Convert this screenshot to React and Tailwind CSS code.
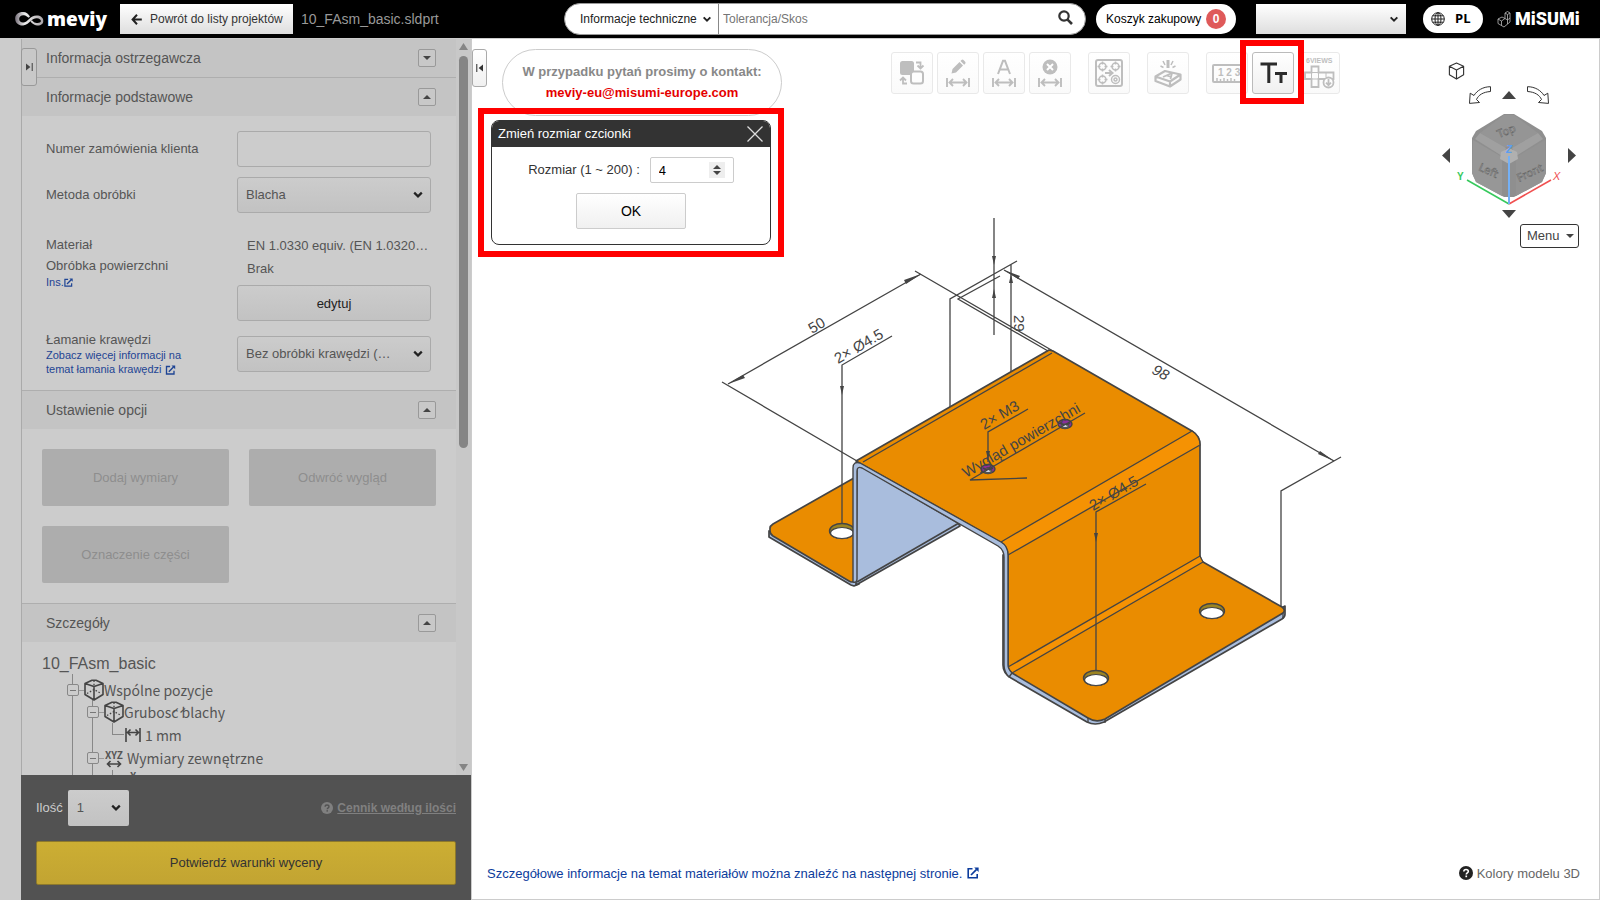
import React from "react";

const Chevron = ({ className = "" }) => (
  <svg viewBox="0 0 10 8" className={"pointer-events-none h-2 w-[10px] " + className} aria-hidden="true">
    <path d="M1.2 1.6 5 5.4 8.8 1.6" fill="none" stroke="#222" strokeWidth="2.2" />
  </svg>
);

const External = ({ className = "" }) => (
  <svg viewBox="0 0 12 12" className={"inline-block " + className} aria-hidden="true">
    <path d="M5.5 1.8H1.2v9h9V7" fill="none" stroke="currentColor" strokeWidth="1.6" />
    <path d="M7.2.6h4.4V5z" fill="currentColor" />
    <path d="M4 8 9.6 2.4" stroke="currentColor" strokeWidth="1.7" />
  </svg>
);

const Tri = ({ points, w, h, fill = "#444", className = "" }) => (
  <svg width={w} height={h} viewBox={`0 0 ${w} ${h}`} className={className} aria-hidden="true">
    <polygon points={points} fill={fill} />
  </svg>
);

const HelpMark = ({ bg, fg, className = "h-[14px] w-[14px]" }) => (
  <svg viewBox="0 0 14 14" className={"shrink-0 " + className} aria-hidden="true">
    <circle cx="7" cy="7" r="7" fill={bg} />
    <path d="M4.8 5.6c0-1.3.9-2.1 2.2-2.1s2.3.8 2.3 1.9c0 1.5-2 1.5-2 3" fill="none" stroke={fg} strokeWidth="1.6" />
    <rect x="6.4" y="9.5" width="1.7" height="1.7" fill={fg} />
  </svg>
);

function Header() {
  return (
    <header className="flex h-[39px] shrink-0 items-center border-b border-[#ccc] bg-black text-[13px]">
      <a href="#" className="ml-[15px] flex w-[90px] items-center gap-[2px] text-white">
        <svg viewBox="0 0 30 18" className="h-[18px] w-[30px] shrink-0" aria-hidden="true">
          <defs>
            <linearGradient id="lg" x1="0" x2="1">
              <stop offset="0" stopColor="#77707a" />
              <stop offset=".35" stopColor="#eee" />
              <stop offset="1" stopColor="#a9a4a8" />
            </linearGradient>
          </defs>
          <path d="M8 2C3 2-.2 5 .2 9.200c.4 4.300 4 6.600 8 6.200 3.600-.4 5.600-2.600 7.800-4.600 1.800-1.600 3.600-2.800 6-2.600 2.400.2 4 1.300 3.900 2.900-.1 2-3.200 2.300-5.400 1.700-1.600-.4-2.600-1.400-3.600-2.600l-1.400 1.300c1.600 2 3.500 3.600 6.500 3.900 3.600.3 6.300-1.400 6.300-4.500 0-3.400-2.800-5.300-6.600-5.300-3.400 0-5.500 1.500-7.600 3.400-2 1.900-3.700 3.700-6.100 3.600C5.600 12.500 4 11 4.200 8.600 4.400 6.200 6.500 4.800 9 5.200c1.800.3 3.200 1.300 4.600 2.500l1.400-1.200C13.400 4 11.300 2 8 2z" fill="url(#lg)" />
        </svg>
        <span className="font-['Open_Sans',sans-serif] text-[19px] leading-6 font-extrabold">meviy</span>
      </a>
      <button className="ml-[15px] flex h-[30px] w-[173px] items-center bg-linear-to-b from-white to-[#dedede] pl-[11px] text-[#333]">
        <svg viewBox="0 0 11 11" className="mr-2 h-[11px] w-[11px]" aria-hidden="true">
          <path d="M6 .8 1.600 5.500 6 10.200M1.800 5.500h9" fill="none" stroke="#222" strokeWidth="2" />
        </svg>
        <span className="whitespace-nowrap text-[12px]">Powrót do listy projektów</span>
      </button>
      <span className="ml-2 text-[14px] text-[#999]">10_FAsm_basic.sldprt</span>
      <form className="ml-auto flex h-[32px] w-[522px] items-center rounded-full border border-[#999] bg-white text-[12px]">
        <div className="relative flex h-full w-[154px] items-center border-r border-[#888]">
          <select aria-label="Kategoria" className="h-full w-full appearance-none bg-transparent pl-[15px] text-[12px] text-[#222]">
            <option>Informacje techniczne</option>
          </select>
          <Chevron className="absolute right-[6px] h-[7px] w-[9px]" />
        </div>
        <input aria-label="Szukaj" placeholder="Tolerancja/Skos" className="h-full min-w-0 flex-1 bg-transparent pl-1 text-[12px] placeholder:text-[#757575]" />
        <button type="button" aria-label="Szukaj" className="mr-3 mb-1">
          <svg viewBox="0 0 15 15" className="h-[15px] w-[15px]" aria-hidden="true">
            <circle cx="6" cy="6" r="4.700" fill="none" stroke="#333" strokeWidth="2.200" />
            <path d="m9.300 9.300 4.700 4.700" stroke="#333" strokeWidth="2.600" />
          </svg>
        </button>
      </form>
      <button className="ml-[10px] flex h-[30px] w-[140px] items-center justify-between rounded-full bg-white pr-[10px] pl-[10px] text-[12px] text-black">
        <span className="whitespace-nowrap">Koszyk zakupowy</span>
        <span className="flex h-5 w-5 items-center justify-center rounded-full bg-[#df5a5a] text-[12px] font-bold text-white">0</span>
      </button>
      <div className="relative ml-5 flex h-[30px] w-[150px] items-center bg-linear-to-b from-white to-[#dedede]">
        <select aria-label="Konto" className="h-full w-full appearance-none bg-transparent" defaultValue="">
          <option value=""></option>
        </select>
        <Chevron className="absolute right-[7px] h-[7px] w-[9px]" />
      </div>
      <button className="ml-[17px] flex h-7 w-[60px] items-center rounded-full bg-white pl-2 font-['Open_Sans',sans-serif] text-[13px] font-bold text-black">
        <svg viewBox="0 0 14 14" className="mr-[10px] h-[14px] w-[14px]" fill="none" stroke="#222" aria-hidden="true">
          <circle cx="7" cy="7" r="6.300" />
          <ellipse cx="7" cy="7" rx="3" ry="6.300" />
          <path d="M.7 7h12.600M7 .7v12.600M1.600 3.800h10.800M1.600 10.200h10.800" />
        </svg>
        PL
      </button>
      <a href="#" className="mr-7 ml-[14px] flex w-[75px] items-center gap-1 text-white">
        <svg viewBox="0 0 14 17" className="h-[17px] w-[14px] shrink-0" fill="none" stroke="#bbb" strokeWidth=".8" aria-hidden="true">
          <path d="m1 8 4-2 3 1.500V2l2.500-1.500L13 2v9l-6 5-6-3.500zM1 8l3.500 2L8 7.500M4.500 10v4.500M8 7.500l2.500 1.500L13 7M10.500 9v4M8 2l2.500 1.500L13 2M10.500 3.500V9" />
        </svg>
        <span className="font-['Liberation_Sans_Narrow','Roboto',sans-serif] text-[18px] leading-5 font-black">MiSUMi</span>
      </a>
    </header>
  );
}

function SectionHead({ title, down = false, line = true }) {
  return (
    <div className={"flex h-[39px] items-center justify-between border-t bg-[#c4c4c4] pr-5 pl-[24px] " + (line ? "border-[#aeaeae]" : "-mt-px border-transparent")}>
      <h2 className="text-[14px] text-[#555]">{title}</h2>
      <button aria-label={title} className="flex h-[18px] w-[18px] items-center justify-center rounded-[2px] border border-[#999] bg-[#c8c8c8]">
        {down ? <Tri w={8} h={4} points="0,0 8,0 4,4" /> : <Tri w={8} h={4} points="0,4 8,4 4,0" />}
      </button>
    </div>
  );
}

function SideSelect({ id, value }) {
  return (
    <div className="relative flex h-9 w-[194px] items-center rounded-[3px] border border-[#aaa] bg-linear-to-b from-[#ccc] to-[#c2c2c2]">
      <select id={id} className="h-full w-full appearance-none bg-transparent pl-2 text-[13px] text-[#555]">
        <option>{value}</option>
      </select>
      <Chevron className="absolute right-[7px]" />
    </div>
  );
}

const CubeIcon = () => (
  <svg viewBox="0 0 20 22" className="h-[22px] w-5 shrink-0" fill="none" stroke="#444" strokeWidth="1.600" strokeLinejoin="round" aria-hidden="true">
    <path d="M1 4.500 8 1.200h4l7 3.300v11L10 21l-9-5.500zM1 4.500l9 3 9-3M10 7.500V21" />
    <path d="m3 14.500 7-4 7 4M10 1.500v6" strokeDasharray="1.500 1.800" strokeWidth="1.300" />
  </svg>
);

const Minus = () => (
  <button aria-label="Zwiń" className="z-10 flex h-3 w-3 shrink-0 items-center justify-center rounded-[2px] border border-[#888] bg-[#ccc]">
    <span className="h-px w-[6px] bg-[#777]" />
  </button>
);

function Tree() {
  return (
    <div className="pt-3 pl-5 text-[#555]">
      <p className="text-[16px] leading-5">10_FAsm_basic</p>
      <ul className="ml-[30px] border-l border-[#888] font-['Noto_Sans_CJK_JP','Noto_Sans',sans-serif] text-[14px]">
        <li className="-ml-[6px]">
          <div className="flex h-[26px] items-center pt-[6px]">
            <Minus />
            <span className="h-px w-[5px] bg-[#999]" />
            <CubeIcon />
            <span>Wspólne pozycje</span>
          </div>
          <ul className="ml-[25px] border-l border-[#888]">
            <li className="-ml-[6px]">
              <div className="flex h-6 items-center">
                <Minus />
                <span className="h-px w-[5px] bg-[#999]" />
                <CubeIcon />
                <span>Grubość blachy</span>
              </div>
              <div className="ml-[25px] flex h-[22px] items-center">
                <span className="mb-[11px] h-3 w-3 self-end border-b border-l border-[#888]" />
                <svg viewBox="0 0 16 14" className="mx-px h-[14px] w-4" fill="none" stroke="#444" strokeWidth="1.600" aria-hidden="true">
                  <path d="M1 0v14M15 0v14M3 4.500h10M5.500 1.500 2.500 4.500l3 3M10.500 1.500l3 3-3 3" />
                </svg>
                <span className="ml-[3px]">1 mm</span>
              </div>
            </li>
            <li className="-ml-[6px]">
              <div className="flex h-6 items-center">
                <Minus />
                <span className="h-px w-[5px] bg-[#999]" />
                <span className="flex w-[20px] flex-col items-center">
                  <span className="text-[10px] leading-[11px] font-bold">XYZ</span>
                  <svg viewBox="0 0 16 8" className="h-2 w-4" fill="none" stroke="#444" strokeWidth="1.600" aria-hidden="true">
                    <path d="M1.500 4h13M4.500 1 1.500 4l3 3M11.500 1l3 3-3 3" />
                  </svg>
                </span>
                <span className="ml-[3px]">Wymiary zewnętrzne</span>
              </div>
              <div className="ml-[25px] flex h-[23px] items-start border-l border-[#888] pl-[17px]">
                <span className="text-[10px] leading-[11px] font-bold">X</span>
              </div>
            </li>
          </ul>
        </li>
      </ul>
    </div>
  );
}

function Sidebar() {
  const option = "flex h-[57px] items-center justify-center rounded-[2px] bg-[#adadad] text-[13px] text-[#8e8e8e]";
  return (
    <aside className="flex w-[471px] shrink-0 bg-[#ccc] pl-[21px]">
      <div className="relative flex min-w-0 flex-1 flex-col">
        <div className="flex min-h-0 flex-1 border-l border-[#aaa]">
          <div className="min-w-0 flex-1 overflow-hidden">
            <SectionHead title="Informacja ostrzegawcza" down line={false} />
            <SectionHead title="Informacje podstawowe" />
            <div className="pt-[15px] pr-[25px] pb-[14px] pl-[24px] text-[13px] text-[#555]">
              <div className="flex items-center justify-between">
                <label htmlFor="order">Numer zamówienia klienta</label>
                <input id="order" className="h-9 w-[194px] rounded-[3px] border border-[#aaa] bg-[#ccc] px-2" />
              </div>
              <div className="mt-[10px] flex items-center justify-between">
                <label htmlFor="method">Metoda obróbki</label>
                <SideSelect id="method" value="Blacha" />
              </div>
              <div className="mt-[21px] flex justify-between">
                <div className="leading-[21px]">
                  <p>Materiał</p>
                  <p>Obróbka powierzchni</p>
                  <a href="#" className="flex items-center text-[11px] leading-3 text-[#1e4494]">
                    Ins.
                    <External className="h-[9px] w-[9px]" />
                  </a>
                </div>
                <div className="w-[194px] leading-[23px]">
                  <p className="pl-[10px] whitespace-nowrap">EN 1.0330 equiv. (EN 1.0320…</p>
                  <p className="pl-[10px]">Brak</p>
                  <button className="mt-[5px] h-9 w-full rounded-[3px] border border-[#aaa] bg-linear-to-b from-[#ccc] to-[#c2c2c2] text-[13px] text-[#222]">edytuj</button>
                </div>
              </div>
              <div className="mt-[11px] flex items-center justify-between">
                <div>
                  <label htmlFor="edge" className="block leading-4">Łamanie krawędzi</label>
                  <a href="#" className="block w-[150px] text-[11px] leading-[14px] text-[#1e4494]">
                    Zobacz więcej informacji na temat łamania krawędzi <External className="h-[10px] w-[11px]" />
                  </a>
                </div>
                <SideSelect id="edge" value="Bez obróbki krawędzi (…" />
              </div>
            </div>
            <SectionHead title="Ustawienie opcji" />
            <div className="grid grid-cols-2 gap-5 p-5">
              <button className={option}>Dodaj wymiary</button>
              <button className={option}>Odwróć wygląd</button>
              <button className={option}>Oznaczenie części</button>
            </div>
            <SectionHead title="Szczegóły" />
            <Tree />
          </div>
          <div className="flex w-[15px] flex-col items-center bg-[#c8c8c8] pt-[4px] pb-1">
            <Tri w={9} h={7} points="0,7 9,7 4.5,0" fill="#858585" />
            <div className="mt-[6px] w-[9px] flex-[391] rounded-full bg-[#858585]" />
            <div className="flex-[316]" />
            <Tri w={9} h={7} points="0,0 9,0 4.5,7" fill="#858585" />
          </div>
        </div>
        <div className="bg-[#525252] px-[15px] pt-[15px] pb-[15px]">
          <div className="flex items-center justify-between">
            <div className="flex items-center gap-[5px] text-[13px]">
              <label htmlFor="qty" className="text-[#ccc]">Ilość</label>
              <div className="relative flex h-9 w-[61px] items-center rounded-[2px] bg-linear-to-b from-[#ccc] to-[#c2c2c2]">
                <select id="qty" className="h-full w-full appearance-none bg-transparent pl-[9px] text-[13px] text-[#555]">
                  <option>1</option>
                </select>
                <Chevron className="absolute right-2" />
              </div>
            </div>
            <a href="#" className="flex items-center gap-1 text-[12px] text-[#808080]">
              <HelpMark bg="#808080" fg="#525252" className="h-3 w-3" />
              <span className="font-bold underline">Cennik według ilości</span>
            </a>
          </div>
          <button className="mt-[15px] h-11 w-full rounded-[2px] border border-[#8d792c] bg-linear-to-b from-[#ccae33] to-[#c2a432] text-[13px] text-[#333]">Potwierdź warunki wyceny</button>
        </div>
        <button aria-label="Rozwiń panel" className="absolute top-[9px] left-0 flex h-[38px] w-[16px] items-center justify-center rounded-[3px] border border-[#999] bg-[#c8c8c8]">
          <svg viewBox="0 0 8 9" className="h-2 w-[7px]" aria-hidden="true"><path d="M0 .5v8l5-4zM6.500 0h1.200v9H6.500z" fill="#444" /></svg>
        </button>
      </div>
    </aside>
  );
}

const G = "#bebebe";
const Span = () => <path d="M2 18v9M24 18v9M4 22.500h18M8 19l-3.500 3.500L8 26M18 19l3.500 3.500L18 26" fill="none" stroke={G} strokeWidth="1.900" />;

const tools = [
  { name: "Zamień", gap: false, icon: (
    <>
      <rect x="1" y="1" width="14" height="14" rx="2.500" fill={G} />
      <rect x="12" y="11.500" width="12" height="12" rx="2.500" fill="#fdfdfd" stroke={G} strokeWidth="2" />
      <path d="M17 2.500h4.500V7M18.500 5.500l3 3 3-3M8 23.500H4V19M1 20.500l3-3 3 3" fill="none" stroke={G} strokeWidth="1.800" />
    </>
  ) },
  { name: "Edytuj wymiar", gap: false, icon: (<><path d="m6.500 13.500 1-4.500 7-7 3.500 3.500-7 7zM15.500 1l1-1q1-.8 2 0l1.700 1.700q.8 1 0 2l-1 1z" fill={G} /><Span /></>) },
  { name: "Tekst", gap: false, icon: (<><path d="M7 14 12 .8h2L19 14M9 9.500h8" fill="none" stroke={G} strokeWidth="2" /><Span /></>) },
  { name: "Usuń wymiar", gap: false, icon: (<><circle cx="13" cy="7" r="7.500" fill={G} /><path d="m10 4 6 6m0-6-6 6" stroke="#fff" strokeWidth="2" /><Span /></>) },
  { name: "Otwory", gap: true, icon: (
    <g fill="none" stroke={G} strokeWidth="1.500">
      <rect x="0" y="0" width="26" height="26" rx="2" strokeWidth="2" />
      <circle cx="6.500" cy="6.500" r="3.500" /><circle cx="19.500" cy="6.500" r="3.500" /><circle cx="6.500" cy="19.500" r="3.500" /><circle cx="19.500" cy="19.500" r="4" /><circle cx="19.500" cy="19.500" r="1.500" />
      <path d="M6.500 1.500v3M6.500 8.500v3M1.500 6.500h3M8.500 6.500h3M19.500 1.500v3M19.500 8.500v3M14.500 6.500h3M21.500 6.500h3M6.500 14.500v3M6.500 21.500v3M1.500 19.500h3M8.500 19.500h3" />
      <path d="M9 13h7M13 10l3.500 3-3.500 3" strokeWidth="2" />
    </g>
  ) },
  { name: "Grawerowanie", gap: true, icon: (
    <g fill="none" stroke={G} strokeWidth="2.200" strokeLinejoin="round">
      <path d="M.5 16.500 10 11l15.500 3.500L15 21.500zM.5 16.500v4.500L15 26.500l10.500-7v-5M15 21.500v5" />
      <path d="m8 17 9-4-1.500 6M11.500 15.500l5 1.500" strokeWidth="1.800" />
      <path d="M13 0v8" strokeWidth="3" />
      <path d="M8 1l2 4M18 1l-2 4M5.500 6l3 1.500M20.500 6l-3 1.500" strokeWidth="1.500" />
    </g>
  ) },
  { name: "Pomiar", gap: true, icon: (
    <>
      <rect x="-1" y="5" width="29" height="17" rx="1" fill="none" stroke={G} strokeWidth="2" />
      <path d="M3 22v-4M6.500 22v-3M10 22v-4M13.500 22v-3M17 22v-4M20.500 22v-3" stroke={G} strokeWidth="1.500" />
      <text x="4" y="15.500" fill={G} className="font-['Liberation_Sans',sans-serif] text-[10px] font-bold">1 2 3</text>
    </>
  ) },
  { name: "Rozmiar czcionki", gap: false, active: true, icon: (
    <path d="M.5 4H17M8.800 4v19M15 13.500h12M21 13.500V23" fill="none" stroke="#2b2b2b" strokeWidth="3" />
  ) },
  { name: "6 widoków", gap: false, icon: (
    <>
      <text x="0" y="3" fill={G} className="font-['Liberation_Sans',sans-serif] text-[7px] font-bold">6VIEWS</text>
      <g fill="none" stroke={G} strokeWidth="1.800">
        <path d="M5.500 12.500V6.500h7v6h15V19h-15v8h-7v-8H-1v-6.500z" />
        <path d="M5.500 12.500h7V19h-7zM20 12.500V17" strokeWidth="1" />
        <circle cx="22.500" cy="22.500" r="5" fill="#fdfdfd" />
        <path d="M22.500 19v6M20 22.700l2.500 2.500 2.500-2.500" />
      </g>
    </>
  ) },
];

function Toolbar() {
  return (
    <div role="toolbar" className="flex gap-1 pt-[13px]">
      {tools.map((t) => (
        <div key={t.name} className={"relative " + (t.gap ? "ml-[13px]" : "") + (t.active ? " z-10" : "")}>
          <button
            aria-label={t.name}
            className={"flex h-[42px] w-[42px] items-center justify-center rounded-[3px] border bg-linear-to-b " + (t.active ? "border-[#bbb] from-white to-[#f0f0f0]" : "border-[#e9e9e9] from-white to-[#fafafa]")}
          >
            <svg viewBox="0 0 26 26" className="h-[26px] w-[26px] overflow-visible" aria-hidden="true">{t.icon}</svg>
          </button>
          {t.active && <div className="pointer-events-none absolute -top-3 -right-[10px] -bottom-[10px] -left-3 border-6 border-[#f00]" />}
        </div>
      ))}
    </div>
  );
}

function ViewCube() {
  const t = "font-['Noto_Sans',sans-serif] text-[11px]";
  return (
    <nav aria-label="Widok" className="flex w-[140px] flex-col items-center pt-[23px]">
      <button aria-label="Widok domyślny" className="ml-[9px] self-start">
        <svg viewBox="0 0 17 19" className="block h-[18px] w-[17px]" fill="none" stroke="#333" strokeWidth="1.200" strokeLinejoin="round" aria-hidden="true">
          <path d="M8.500 1 16 4.500v9L8.500 18 1 13.500v-9zM1 4.500 8.500 8.500 16 4.500M8.500 8.500V18" />
        </svg>
      </button>
      <div className="mt-[6px] flex w-[80px] items-center justify-between">
        <button aria-label="Obróć w lewo">
          <svg viewBox="0 0 22 18" className="block h-[18px] w-[22px]" fill="none" stroke="#333" aria-hidden="true"><path d="M21.500.7C14 .7 8 4.500 5 9.500L1.200 7.200.5 17.400l10-.9-3-3C9.500 9 14 6 21.500 5.500z" /></svg>
        </button>
        <button aria-label="Obróć w górę"><Tri w={14} h={8} points="0,8 14,8 7,0" className="block" /></button>
        <button aria-label="Obróć w prawo">
          <svg viewBox="0 0 22 18" className="block h-[18px] w-[22px]" fill="none" stroke="#333" aria-hidden="true"><path d="M.5.7C8 .7 14 4.500 17 9.500l3.800-2.300.7 10.200-10-.9 3-3C12.500 9 8 6 .5 5.500z" /></svg>
        </button>
      </div>
      <div className="mt-[9px] flex w-[134px] items-center justify-between">
        <button aria-label="Lewo" className="mb-2"><Tri w={8} h={15} points="8,0 8,15 0,7.5" /></button>
        <svg viewBox="0 0 106 92" className="h-[92px] w-[106px]" aria-label="Orientacja">
          <path d="M48 1h10l28 17 4 7v35l-4 9-28 15H48L20 69l-4-9V25l4-7z" fill="#8f8f8f" />
          <path d="m24 20 24-18h10l24 18-24 14H48z" fill="#959595" />
          <path d="m24 20-5 6 27 17 4-8zM82 20l5 6-27 17-4-8z" fill="#a0a0a0" />
          <path d="m17 27 29 17v39L20 69l-4-9z" fill="#979797" />
          <path d="m89 27-29 17v39l26-14 4-9z" fill="#939393" />
          <path d="m45 39 8-4 8 4 1 7-9 5-9-5z" fill="#b0b0b0" />
          <g fill="#c2c2c2" stroke="#666" strokeWidth=".6">
            <text transform="translate(43 25) rotate(-22)" className={t}>Top</text>
            <text transform="translate(22 57) rotate(24)" className={t}>Left</text>
            <text transform="translate(63 69) rotate(-25)" className={t}>Front</text>
          </g>
          <path d="M11 67 53 91" stroke="#36c95c" strokeWidth="1.600" />
          <path d="M95 67 53 91" stroke="#f05050" strokeWidth="1.600" />
          <path d="M53 91V43" stroke="#74b0f5" strokeWidth="2" />
          <text x="50" y="40" fill="#5b9df0" className="font-['Liberation_Sans',sans-serif] text-[10px] font-bold italic">Z</text>
          <text x="1" y="67" fill="#36c95c" className="font-['Liberation_Sans',sans-serif] text-[10px] font-bold">Y</text>
          <text x="97" y="67" fill="#f05050" className="font-['Liberation_Sans',sans-serif] text-[11px] italic">X</text>
        </svg>
        <button aria-label="Prawo" className="mb-2"><Tri w={8} h={15} points="0,0 0,15 8,7.5" /></button>
      </div>
      <button aria-label="Obróć w dół" className="mt-[5px]"><Tri w={14} h={8} points="0,0 14,0 7,8" className="block" /></button>
      <button className="mt-[6px] flex h-6 w-[59px] items-center justify-between self-end rounded-[3px] border border-[#333] bg-white pr-1 pl-[6px] text-[13px] text-[#444]">
        Menu
        <Tri w={8} h={4} points="0,0 8,0 4,4" />
      </button>
    </nav>
  );
}

const Hole = ({ x, y }) => (
  <g>
    <ellipse cx={x} cy={y} rx="12.500" ry="7.500" fill="#9b8422" stroke="#444" strokeWidth="1.400" />
    <ellipse cx={x} cy={y + 2} rx="11.500" ry="5.500" fill="#fff" stroke="#444" strokeWidth="1.200" />
  </g>
);

const Tapped = ({ x, y }) => (
  <g>
    <ellipse cx={x} cy={y} rx="7" ry="4.500" fill="#8b2f9c" stroke="#444" strokeWidth="1.400" />
    <ellipse cx={x} cy={y + 2} rx="3.500" ry="1.800" fill="#d8dcec" stroke="#555" />
    <path d={`M${x - 5} ${y - 1}l4 2M${x + 5} ${y - 1}l-4 2`} stroke="#444" />
  </g>
);

function Model() {
  const t = "font-['Liberation_Sans',sans-serif] text-[15px]";
  return (
    <svg viewBox="472 39 1127 860" className="absolute inset-0 h-full w-full" aria-label="Model 3D">
      <g stroke="#444" strokeWidth="1.700" strokeLinejoin="round">
        {/* left flange */}
        <path d="M769 531v6l82 48 3 1 5-2v-20z" fill="#a9bddd" />
        <path d="M770 528q0-2 3-4l81-46v103q-2 2-5 0l-76-45q-3-2-3-5z" fill="#ea8c00" />
        <Hole x={842} y={531} />
        {/* rear wall seen from inside */}
        <path d="M857 464 958 523l2 3-104 59z" fill="#a9bddd" />
        <path d="M857 582 959 523" fill="none" />
        {/* right flange thickness */}
        <path d="M1003 555v110q0 8 8 13l76 44q8 4 17 0l178-103q3-2 3-5v-8l-190 105z" fill="#a9bddd" />
        {/* outer skin */}
        <path d="M856 461 1049 350l4 1 139 80q8 5 8 14v111q0 3 3 6l79 45q4 3 1 6L1105 719q-9 4-17-1l-76-45q-4-4-4-8V555q0-8-8-13z" fill="#ea8c00" />
        <path d="M1001 542 1192 431q8 5 8 14L1008 555q0-8-7-13z" fill="#f59203" strokeWidth="1.300" />
        <path d="M1008 667 1200 556l3 6-191 111q-3-2-4-6z" fill="#f59203" strokeWidth="1.300" />
        <path d="M863 462 1052 353" fill="none" strokeWidth="1.300" />
        <path d="M1283 613v6M1105 719v4M1088 718v4" fill="none" strokeWidth="1.300" />
        {/* front profile */}
        <path d="M853 582V468q0-7 7-5l141 79q7 4 7 13v110q0 4 4 8l-3 4q-5-5-5-12V557q0-7-6-11L862 468q-5-2-5 3v108q0 4-4 3z" fill="#a9bddd" strokeWidth="1.400" />
        <Hole x={1096} y={678} />
        <Hole x={1212} y={611} />
        <Tapped x={1065} y={424} />
        <Tapped x={988} y={469} />
      </g>
      <g fill="none" stroke="#444" strokeWidth="1.300">
        <path d="M728 384 921 274M722 382 857 461M915 271 1053 351M1048 351 958 299 1000 276M950 407V299L1017 261M1011 372V264M994 218V335" />
        <path d="M1004 270 1334 461M1341 457 1281 491V607" />
        <path d="M842 523V365L892 336M1096 670V512L1146 484M988 462V432L1028 409" />
        <path d="M1027 478 970 480 1085 413" />
      </g>
      <g fill="#444">
        <path d="m728 384 17-6-2-3zM921 274l-17 6 2 4zM842 395l-2-9h4zM1096 542l-2-9h4zM988 460l-2-9h4zM994 265l-2-9h4zM994 289l-2 9h4zM1011 274l-2 9h4zM1004 270l16 6-2 3zM1334 461l-16-7 2-3z" />
        <text transform="translate(812 334) rotate(-30)" className={t}>50</text>
        <text transform="translate(838 364) rotate(-30)" className={t}>2× Ø4.5</text>
        <text transform="translate(1014 315) rotate(90)" className={t}>29</text>
        <text transform="translate(1151 373) rotate(28)" className={t + " italic"}>98</text>
        <text transform="translate(984 430) rotate(-30)" className={t}>2× M3</text>
        <text transform="translate(966 478) rotate(-30)" className={t}>Wygląd powierzchni</text>
        <text transform="translate(1093 511) rotate(-30)" className={t}>2× Ø4.5</text>
      </g>
    </svg>
  );
}

function FontDialog() {
  return (
    <div className="absolute top-[69px] left-[6px] z-20 border-6 border-[#f00] px-[7px] pt-[6px] pb-[6px]">
      <section role="dialog" aria-labelledby="dlg" className="w-[280px] overflow-hidden rounded-lg border border-[#333] bg-white text-[13px]">
        <div className="flex h-[26px] items-center justify-between bg-[#333] pr-[7px] pl-[6px] text-white">
          <h2 id="dlg">Zmień rozmiar czcionki</h2>
          <button aria-label="Zamknij">
            <svg viewBox="0 0 16 16" className="h-4 w-4" aria-hidden="true"><path d="m.5.5 15 15m0-15-15 15" stroke="#ddd" strokeWidth="1.300" /></svg>
          </button>
        </div>
        <div className="flex flex-col items-center pt-[10px] pb-[15px]">
          <div className="flex items-center gap-[10px] text-[#333]">
            <label htmlFor="size">Rozmiar (1 ~ 200) :</label>
            <div className="relative flex h-[26px] w-[84px] items-center rounded-[2px] border border-[#ccc]">
              <input id="size" type="number" defaultValue="4" className="h-full w-full [appearance:textfield] bg-transparent pl-2 text-[13px] text-black [&::-webkit-inner-spin-button]:appearance-none" />
              <div className="absolute right-2 flex h-4 w-4 flex-col items-center justify-center gap-[2px] bg-[#eee]">
                <Tri w={8} h={4} points="0,4 8,4 4,0" />
                <Tri w={8} h={4} points="0,0 8,0 4,4" />
              </div>
            </div>
          </div>
          <button className="mt-[10px] h-9 w-[110px] rounded-[2px] border border-[#ccc] bg-linear-to-b from-white to-[#f0f0f0] text-[14px] text-black">OK</button>
        </div>
      </section>
    </div>
  );
}

function Viewer() {
  return (
    <main className="relative flex min-w-0 flex-1 flex-col border-x border-b border-[#ccc] bg-white">
      <Model />
      <div className="relative flex items-start">
        <button aria-label="Zwiń panel" className="mt-[10px] flex h-[38px] w-[15px] shrink-0 items-center justify-center rounded-[3px] border border-[#aaa] bg-linear-to-b from-white to-[#f0f0f0]">
          <svg viewBox="0 0 8 9" className="h-2 w-[7px]" aria-hidden="true"><path d="M8 .5v8l-5-4zM.3 0h1.200v9H.3z" fill="#333" /></svg>
        </button>
        <div className="mt-[10px] ml-[15px] flex h-[67px] w-[280px] shrink-0 flex-col items-center rounded-[34px] border border-[#ccc] pt-[11px] text-[13px] leading-[21px] font-bold">
          <p className="text-[#888]">W przypadku pytań prosimy o kontakt:</p>
          <a href="mailto:meviy-eu@misumi-europe.com" className="text-[#e50000]">meviy-eu@misumi-europe.com</a>
        </div>
        <div className="ml-auto flex items-start gap-[99px] pr-5">
          <Toolbar />
          <ViewCube />
        </div>
      </div>
      <FontDialog />
      <footer className="relative mt-auto flex items-center justify-between pr-[19px] pb-4 pl-[15px]">
        <a href="#" className="flex items-center gap-[5px] text-[13px] text-[#0c3c9c]">
          Szczegółowe informacje na temat materiałów można znaleźć na następnej stronie.
          <External className="h-3 w-3" />
        </a>
        <button className="flex items-center gap-1 text-[13px] text-[#666]">
          <HelpMark bg="#222" fg="#fff" />
          Kolory modelu 3D
        </button>
      </footer>
    </main>
  );
}

export default function App() {
  return (
    <div className="flex h-screen flex-col overflow-hidden bg-white font-['Liberation_Sans',sans-serif]">
      <Header />
      <div className="flex min-h-0 flex-1">
        <Sidebar />
        <Viewer />
      </div>
    </div>
  );
}
